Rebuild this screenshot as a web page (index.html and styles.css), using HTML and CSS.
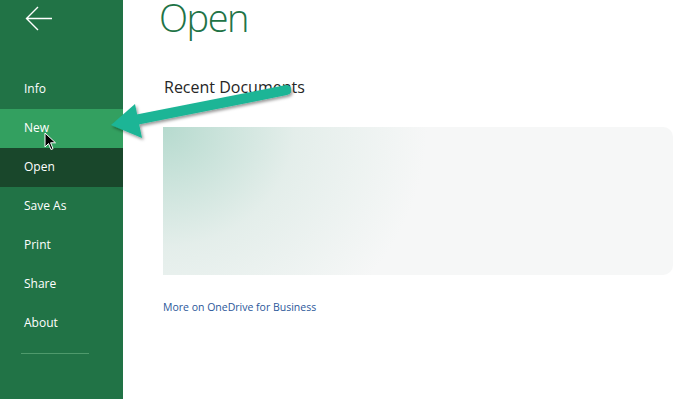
FILE: index.html
```html
<!DOCTYPE html>
<html>
<head>
<meta charset="utf-8">
<link rel="stylesheet" href="styles.css">
</head>
<body>
<div class="app">
  <nav class="side">
    <div class="back">
      <svg width="30" height="28" viewBox="0 0 30 28"><path d="M28 13.5H3 M14 2L2.5 13.5L14 25" fill="none" stroke="#fff" stroke-width="1.4"/></svg>
    </div>
    <ul class="menu">
      <li>Info</li>
      <li class="hover">New</li>
      <li class="active">Open</li>
      <li>Save As</li>
      <li>Print</li>
      <li>Share</li>
      <li>About</li>
    </ul>
    <div class="sep"></div>
  </nav>
  <main class="content">
    <h1 class="title">Open</h1>
    <h2 class="sub">Recent Documents</h2>
    <div class="card"></div>
    <a class="more">More on OneDrive for Business</a>
  </main>
  <svg class="arrow" width="200" height="70" viewBox="0 0 200 70">
    <defs>
      <filter id="sh" x="-10%" y="-30%" width="120%" height="160%">
        <feDropShadow dx="1.5" dy="2" stdDeviation="1.5" flood-color="#000" flood-opacity="0.4"/>
      </filter>
    </defs>
    <g filter="url(#sh)" fill="#1bb596">
      <path d="M34 35 L186 5 Q191 5 191 10 Q191 14 187 15 L36 45 Z"/>
      <path d="M11 45 L35 24 L42 58 Z"/>
    </g>
  </svg>
  <svg class="cursor" width="14" height="20" viewBox="0 0 14 20">
    <path d="M1 1 L1 15 L4.5 11.5 L7 17.5 L9 16.7 L6.6 10.8 L11.5 10.8 Z" fill="#000" stroke="#fff" stroke-width="1"/>
  </svg>
</div>
</body>
</html>
```
FILE: styles.css
```css
* { box-sizing: border-box; }
html, body { margin: 0; padding: 0; }
body { width: 680px; height: 399px; overflow: hidden; background: #fff; font-family: "Open Sans", "Noto Sans", sans-serif; }
.app { display: flex; height: 399px; position: relative; }
.side { width: 123px; background: #217346; color: #fff; display: flex; flex-direction: column; }
.back { height: 70px; padding: 5px 0 0 24px; }
.menu { list-style: none; margin: 0; padding: 0; }
.menu li { height: 39px; line-height: 37px; padding-left: 24px; font-size: 12px; }
.menu li.hover { background: #33a060; }
.menu li.active { background: #19472b; }
.sep { margin: 10px 0 0 21px; width: 68px; height: 1px; background: #4f9a6c; }
.content { flex: 1; padding-left: 40px; display: flex; flex-direction: column; }
.title { margin: 2px 0 0 -4px; font-weight: 300; font-size: 38px; color: #217346; line-height: 30px; letter-spacing: -1.5px; }
.sub { margin: 44px 0 0 1px; font-weight: 400; font-size: 16px; color: #262626; line-height: 22px; }
.card { margin-top: 29px; width: 510px; height: 148px; border-radius: 0 10px 10px 0;
  background: radial-gradient(ellipse 330px 300px at 0% 0%, rgba(175,215,202,0.9) 0%, rgba(220,234,229,0.7) 40%, rgba(245,246,246,0) 80%), #f6f7f7; }
.more { margin-top: 25px; font-size: 10.5px; color: #2b579a; }
.arrow { position: absolute; left: 100px; top: 80px; }
.cursor { position: absolute; left: 44px; top: 132px; }
```
